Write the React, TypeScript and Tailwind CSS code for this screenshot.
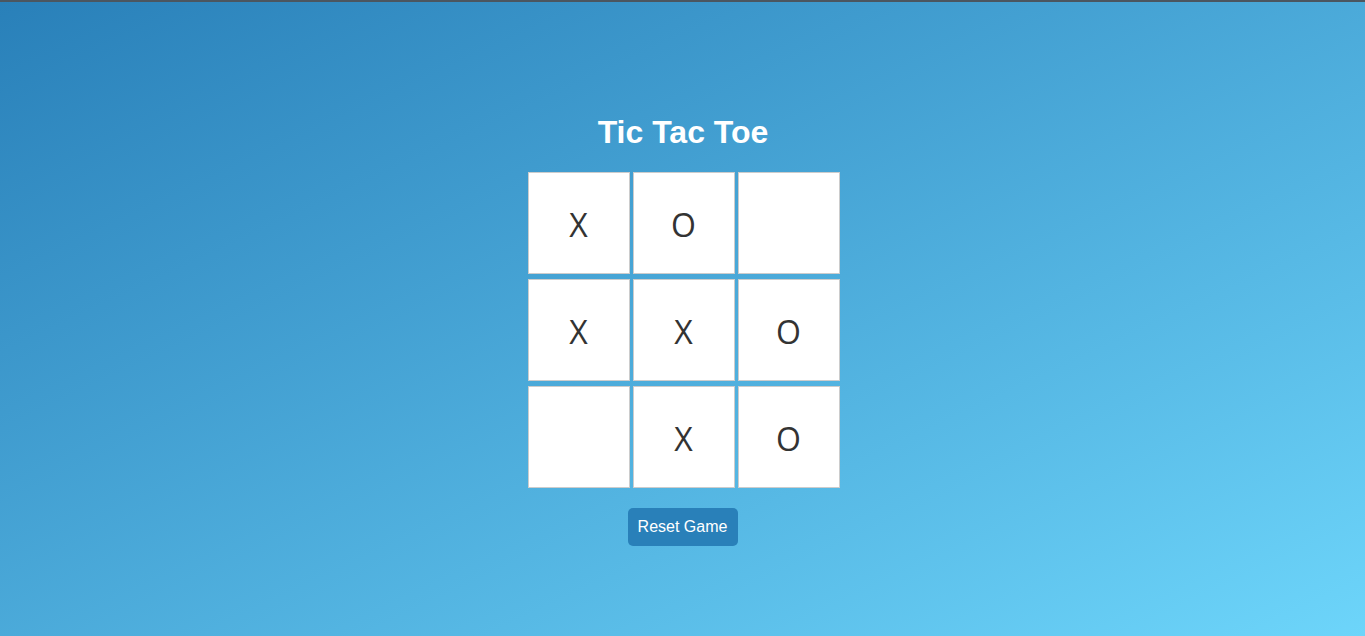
import { useState } from "react";

type Cell = "X" | "O" | null;

const start: Cell[] = ["X", "O", null, "X", "X", "O", null, "X", "O"];

export default function App() {
  const [board, setBoard] = useState<Cell[]>(start);
  const [turn, setTurn] = useState<"X" | "O">("O");

  function play(i: number) {
    if (board[i]) return;
    const next = board.slice();
    next[i] = turn;
    setBoard(next);
    setTurn(turn === "X" ? "O" : "X");
  }

  function reset() {
    setBoard(Array(9).fill(null));
    setTurn("X");
  }

  const rows = [0, 1, 2].map((r) => board.slice(r * 3, r * 3 + 3));

  return (
    <div
      className="min-h-[636px] w-full border-t-2 border-[#4b5660] bg-gradient-to-br from-[#2980b9] to-[#6dd5fa] flex flex-col items-center pt-[112px]"
      style={{ fontFamily: '"Liberation Sans", Arial, sans-serif' }}
    >
      <h1 className="text-[32px] leading-[37px] font-bold text-white mb-[21px] pl-[1px]">Tic Tac Toe</h1>

      <div className="flex flex-col gap-[5px] pl-[2px]">
        {rows.map((row, r) => (
          <div key={r} className="flex gap-[3px]">
            {row.map((cell, c) => (
              <button
                key={c}
                onClick={() => play(r * 3 + c)}
                className="w-[102px] h-[102px] bg-white border border-[#cccccc] font-['Open_Sans',sans-serif] text-[32px] leading-none pt-[4px] text-[#333333] flex items-center justify-center cursor-pointer"
              >
                {cell}
              </button>
            ))}
          </div>
        ))}
      </div>

      <button
        onClick={reset}
        className="mt-[20px] h-[38px] w-[110px] rounded-[5px] bg-[#2980b9] text-white text-[16px] leading-[18px] cursor-pointer"
      >
        Reset Game
      </button>
    </div>
  );
}
